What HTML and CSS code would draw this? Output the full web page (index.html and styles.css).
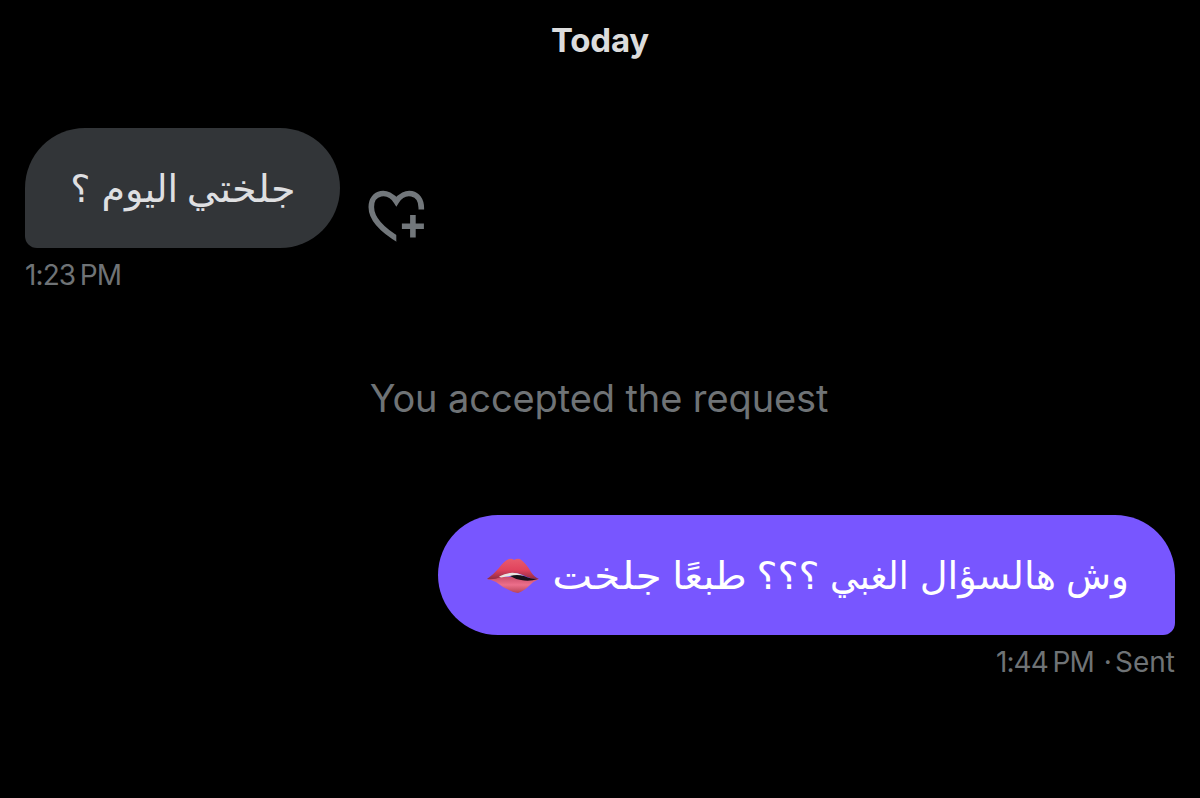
FILE: index.html
```html
<!DOCTYPE html>
<html lang="en">
<head>
<meta charset="utf-8">
<title>Messages</title>
<link rel="stylesheet" href="styles.css">
</head>
<body>
<main class="chat">
  <h1 class="day"><span>Today</span></h1>
  <section class="message incoming">
    <div class="row">
      <div class="bubble" dir="rtl" lang="ar"><span class="words"><span class="word in-one">جلختي</span> اليوم <span class="word in-mark">؟</span></span></div>
      <svg class="react" viewBox="0 0 60 54" aria-label="Add reaction">
        <defs><clipPath id="heart-cut"><path d="M0 0H60V19.5H40V30H29.3V54H0Z"/></clipPath></defs>
        <g fill="none" stroke="#72777b" stroke-width="5.6">
          <path clip-path="url(#heart-cut)" d="M33 50.5C15 40 4.3 29 4.3 17C4.3 1.5 21.5-.8 29.3 11.5C37-.8 54.3 1.2 54.3 18V22"/>
          <path d="M45.9 25V47.5M34.9 36.2H56.9"/>
        </g>
      </svg>
    </div>
    <div class="meta"><span class="time">1:23 PM</span></div>
  </section>
  <p class="notice"><span>You accepted the request</span></p>
  <section class="message outgoing">
    <div class="bubble" dir="rtl" lang="ar">
      <span class="words"><span class="word out-one">وش</span> <span class="word out-two">هالسؤال</span> <span class="word out-three">الغبي</span> <span class="word out-mark">؟؟؟</span> <span class="word out-four">طبعًا</span> <span class="word out-five">جلخت</span></span>
      <svg class="lips" viewBox="0 0 54 38" aria-label="Biting lip">
        <defs>
          <linearGradient id="upper" x1="0" y1="0" x2="0" y2="1"><stop offset="0" stop-color="#e85b6d"/><stop offset=".55" stop-color="#e1435d"/><stop offset="1" stop-color="#8e2b43"/></linearGradient>
          <linearGradient id="lower" x1="0" y1="0" x2="0" y2="1"><stop offset="0" stop-color="#cb4c69"/><stop offset=".5" stop-color="#ec6f8b"/><stop offset="1" stop-color="#b94356"/></linearGradient>
        </defs>
        <path d="M1 22Q10 19 27 20T53 22Q48 24 44 28Q38 34 32 36Q28 36 23 33Q16 30 10 25Q6 23 1 22Z" fill="url(#lower)"/>
        <path d="M1 22Q8 17 13 11Q18 4 23 2Q26 1 28 3Q31 1 34 2Q40 6 45 15Q48 20 53 22Q44 22 37 18Q25 13 15 20Q8 23 1 22Z" fill="url(#upper)"/>
        <path d="M13 19.5Q25 13 36 18L39 20Q25 18 15 20.5Z" fill="#e9e6df"/>
        <path d="M24 19Q31 17 38 19Q44 22 52 22Q43 25 35 23Q29 22 24 19Z" fill="#171018"/>
      </svg>
    </div>
    <div class="meta"><span class="time">1:44 PM</span><span class="dot">·</span><span class="sent">Sent</span></div>
  </section>
</main>
</body>
</html>
```
FILE: styles.css
```css
* { box-sizing: border-box; }
body { margin: 0; background: #000; font-family: Inter, "Liberation Sans", sans-serif; }
.chat { width: 1200px; height: 798px; padding: 19px 25px 0; overflow: hidden; display: flex; flex-direction: column; }
.day { margin: 0; height: 109px; color: #dcdcdc; font-size: 33px; line-height: 42px; font-weight: 700; letter-spacing: -0.2px; text-align: center; }
.message { display: flex; flex-direction: column; }
.incoming { align-items: flex-start; }
.outgoing { align-items: flex-end; }
.row { display: flex; align-items: flex-end; gap: 27px; }
.bubble { height: 120px; padding-top: 2px; display: flex; align-items: center; justify-content: flex-start; color: #dedfe1; font-family: "DejaVu Sans", sans-serif; font-size: 38px; white-space: nowrap; }
.incoming .bubble { width: 315px; padding-right: 46px; background: #323538; border-radius: 60px 60px 60px 12px; }
.outgoing .bubble { width: 737px; padding-right: 46px; background: #7856ff; color: #fff; border-radius: 60px 60px 12px 60px; gap: 15px; }
.words { flex: none; }

/* Optical width and spacing of each Arabic word */
.word { display: inline-block; transform-origin: right center; }
.in-one { transform: translateX(2px) scaleX(1.05); }
.in-mark { transform: translateX(1px); }
.out-one { transform: scaleX(0.97); }
.out-two { transform: translateX(4px) scaleX(1.01); }
.out-three { transform: translateX(3px) scaleX(0.94); }
.out-mark { transform: translateX(10px) scaleX(1.04); }
.out-four { transform: translateX(10px) scaleX(1.04); }
.out-five { transform: translateX(9px) scaleX(1.12); }

.react { width: 60px; height: 54px; margin-bottom: 4px; }
.lips { width: 54px; height: 38px; flex: none; }
.meta { display: flex; height: 54px; line-height: 54px; color: #6f7376; font-size: 28px; letter-spacing: -0.9px; word-spacing: -2.5px; white-space: nowrap; }
.notice { margin: 0; height: 213px; padding: 71px 2px 0 0; line-height: 50px; text-align: center; color: #6f7376; font-size: 38px; letter-spacing: -0.1px; }
.dot { margin: 0 4px 0 10px; }
.sent { letter-spacing: 0; }
```
